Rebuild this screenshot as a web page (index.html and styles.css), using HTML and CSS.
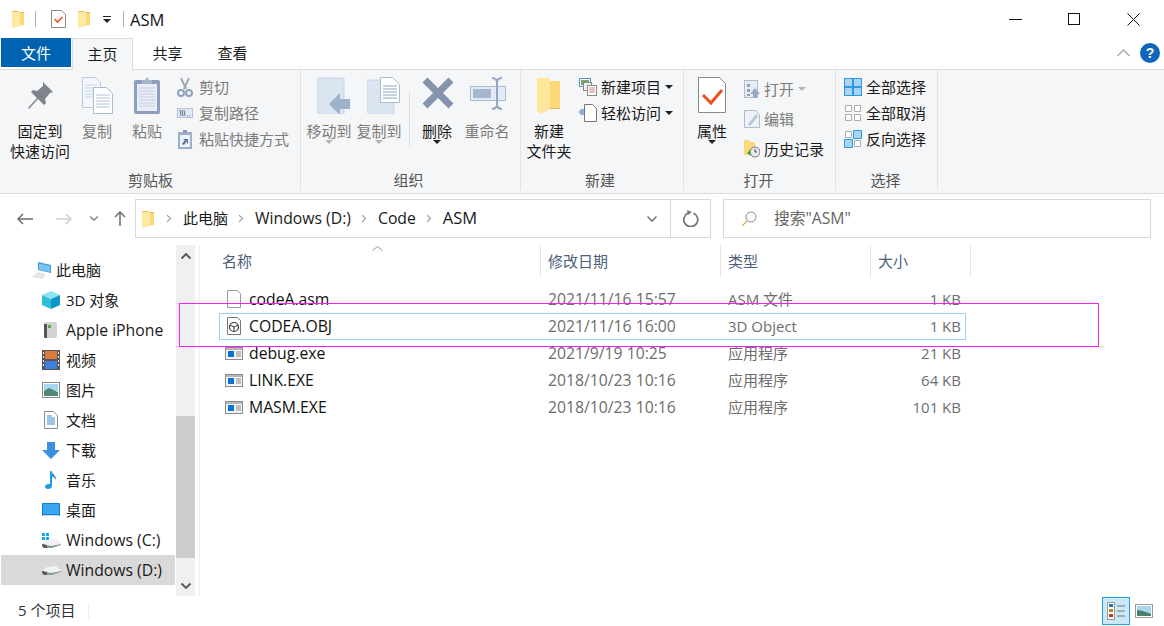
FILE: index.html
```html
<!DOCTYPE html>
<html lang="zh-CN">
<head>
    <meta charset="UTF-8">
    <meta name="viewport" content="width=device-width, initial-scale=1.0">
    <title>ASM</title>
    <link rel="stylesheet" href="styles.css">
</head>
<body>
    <svg class="sprite" xmlns="http://www.w3.org/2000/svg">
        <symbol id="folder" viewBox="0 0 13 18">
            <path d="M0 1h6l1 1h5v13H0z" fill="#e9bd58"/>
            <path d="M0 2h7l1 1 4 0v12l-8 2-4 1z" fill="#ffe9a3"/>
            <path d="M8 3h4v12H8z" fill="#fbd977"/>
        </symbol>
        <symbol id="chev-right" viewBox="0 0 8 12">
            <path d="M1.5 1.5 6 6l-4.5 4.5" fill="none" stroke="#9a9a9a" stroke-width="1.5"/>
        </symbol>
        <symbol id="chev-down" viewBox="0 0 12 8">
            <path d="M1.5 1.5 6 6l4.5-4.5" fill="none" stroke="#7a7a7a" stroke-width="1.6"/>
        </symbol>
        <symbol id="exe" viewBox="0 0 18 13">
            <rect x=".5" y=".5" width="17" height="12" fill="#f4f4f4" stroke="#8b8b8b"/>
            <path d="M1 1h16v2H1z" fill="#b5b5b5"/>
            <rect x="3" y="4" width="6" height="6" fill="#0a74d6"/>
            <path d="M11 5h5M11 7h5M11 9h5" stroke="#8a8a8a"/>
        </symbol>
        <symbol id="drive" viewBox="0 0 19 10">
            <path d="M0 6 5 2l9-1 5 4v2l-9 3H2L0 8z" fill="#f1f1f1"/>
            <path d="M0 6l9 2 10-2v1l-9 3H2L0 8z" fill="#9a9a9a"/>
            <path d="M0 6l5 1v3H2L0 8z" fill="#5c5c5c"/>
            <path d="M7 8h3v1H7z" fill="#3dbb3d"/>
        </symbol>
    </svg>

    <div class="titlebar">
        <svg class="ic-folder" width="13" height="18"><use href="#folder"/></svg>
        <span class="title-sep sep-a"></span>
        <svg class="ic-props" width="15" height="18" viewBox="0 0 15 18">
            <path d="M.5.5h10l4 4v13H.5z" fill="#fff" stroke="#8a8a8a"/>
            <path d="M3.5 9l3 3 5-5" fill="none" stroke="#e8541e" stroke-width="1.6"/>
        </svg>
        <svg class="ic-folder2" width="13" height="18"><use href="#folder"/></svg>
        <svg class="ic-qat" width="8" height="7" viewBox="0 0 8 7"><path d="M0 0h8v1H0zM0 3h8L4 7z" fill="#222"/></svg>
        <span class="title-sep sep-b"></span>
        <span class="title-text">ASM</span>
        <div class="window-btns">
            <svg width="13" height="13" viewBox="0 0 13 13"><path d="M0 6.5h13" stroke="#111"/></svg>
            <svg width="13" height="13" viewBox="0 0 13 13"><rect x=".5" y=".5" width="11" height="11" fill="none" stroke="#111"/></svg>
            <svg width="13" height="13" viewBox="0 0 13 13"><path d="M.5.5l12 12M12.500.5l-12 12" stroke="#111"/></svg>
        </div>
    </div>

    <div class="tabs">
        <div class="tab tab-file">文件</div>
        <div class="tab tab-active">主页</div>
        <div class="tab tab-plain">共享</div>
        <div class="tab tab-plain">查看</div>
        <div class="tabs-right">
            <svg width="13" height="8" viewBox="0 0 13 8"><path d="M.5 7 6.500 1l6 6" fill="none" stroke="#a9a9a9" stroke-width="1.4"/></svg>
            <span class="help">?</span>
        </div>
    </div>

    <div class="ribbon">
        <div class="group group-clip">
            <div class="group-body">
                <div class="big big-pin">
                    <div class="big-icon icon-pin">
                        <svg width="27" height="27" viewBox="0 0 27 27"><path d="M17 0l10 10-3 1-5 6 1 4-2 2-6-6-9 10-1-1 9-10-6-6 2-2 4 1 6-5z" fill="#7e838c"/></svg>
                    </div>
                    <span>固定到<br>快速访问</span>
                </div>
                <div class="big big-50 off">
                    <div class="big-icon">
                        <svg width="31" height="37" viewBox="0 0 31 37">
                            <path d="M.5.5h13l5 5v25H.5z" fill="#f3f6fb" stroke="#bcc9da"/>
                            <path d="M3 8h12M3 11h12M3 14h12M3 17h12M3 20h12" stroke="#c5d2e3"/>
                            <path d="M11.500 10.500h13l6 6v20h-19z" fill="#fff" stroke="#a9bcd3"/>
                            <path d="M14 18h14M14 21h14M14 24h14M14 27h14M14 30h14" stroke="#b2c3d8"/>
                        </svg>
                    </div>
                    <span>复制</span>
                </div>
                <div class="big big-50 off">
                    <div class="big-icon">
                        <svg width="26" height="37" viewBox="0 0 26 37">
                            <rect x="0" y="3" width="26" height="34" rx="2" fill="#8d9fbc"/>
                            <rect x="3" y="7" width="20" height="27" fill="#e9eef6"/>
                            <path d="M5 11h16M5 14h16M5 17h16M5 20h16M5 23h16M5 26h16M5 29h16" stroke="#c5d0e1"/>
                            <path d="M8 7V3h3l2-3 2 3h3v4z" fill="#a8b6cc"/>
                        </svg>
                    </div>
                    <span>粘贴</span>
                </div>
                <div class="small-stack off">
                    <div class="small">
                        <svg class="small-ic" width="16" height="19" viewBox="0 0 16 19">
                            <path d="M4 0l5 11M12 0 7 11" stroke="#a3a8b0" stroke-width="2" fill="none"/>
                            <circle cx="4" cy="15" r="3" fill="none" stroke="#8fa3bf" stroke-width="2"/>
                            <circle cx="12" cy="15" r="3" fill="none" stroke="#8fa3bf" stroke-width="2"/>
                        </svg>
                        <span>剪切</span>
                    </div>
                    <div class="small">
                        <svg class="small-ic" width="16" height="10" viewBox="0 0 16 10">
                            <rect x=".5" y=".5" width="15" height="9" fill="#e3e9f3" stroke="#b5c3d8"/>
                            <path d="M3 2l1 6M5 2l1 6M7 2l1 6" stroke="#5f7491"/>
                            <path d="M10 8h1M12 8h1" stroke="#5f7491"/>
                        </svg>
                        <span>复制路径</span>
                    </div>
                    <div class="small">
                        <svg class="small-ic" width="14" height="19" viewBox="0 0 14 19">
                            <rect y="2" width="14" height="17" fill="#9db0ca"/>
                            <rect x="2" y="5" width="10" height="12" fill="#eef2f8"/>
                            <path d="M5 0h4v3H5z" fill="#8a9cb7"/>
                            <path d="M4 14l3-4H5l1-1h4v4l-1 1V11l-3 4z" fill="#5b6f8f"/>
                        </svg>
                        <span>粘贴快捷方式</span>
                    </div>
                </div>
            </div>
            <div class="group-label">剪贴板</div>
        </div>

        <div class="group group-org">
            <div class="group-body">
                <div class="big big-50 off">
                    <div class="big-icon icon-right">
                        <svg width="33" height="37" viewBox="0 0 33 37">
                            <path d="M0 1h27v36H3l-3-2z" fill="#dbe5f2" stroke="#c8d6e8"/>
                            <path d="M12 27l11-11v6h10v10H23v6z" fill="#9fb2cc"/>
                        </svg>
                    </div>
                    <span>移动到</span>
                    <i class="caret caret-off"></i>
                </div>
                <div class="big big-50 off">
                    <div class="big-icon icon-right">
                        <svg width="33" height="37" viewBox="0 0 33 37">
                            <path d="M0 3h27v34H3l-3-2z" fill="#dbe5f2" stroke="#c8d6e8"/>
                            <path d="M13.500.5h12l7 7v18h-19z" fill="#fff" stroke="#a9bcd3"/>
                            <path d="M16 9h14M16 12h14M16 15h14M16 18h14M16 21h14" stroke="#8fa3bf"/>
                        </svg>
                    </div>
                    <span>复制到</span>
                    <i class="caret caret-off"></i>
                </div>
                <span class="inner-sep"></span>
                <div class="big big-50">
                    <div class="big-icon icon-nudge">
                        <svg width="32" height="32" viewBox="0 0 32 32"><path d="M3 3l26 26M29 3 3 29" stroke="#8494ad" stroke-width="7"/></svg>
                    </div>
                    <span>删除</span>
                    <i class="caret"></i>
                </div>
                <div class="big big-50 off">
                    <div class="big-icon icon-nudge">
                        <svg width="36" height="33" viewBox="0 0 36 33">
                            <rect x=".5" y="9.500" width="35" height="14" fill="#e4ebf5" stroke="#a9bcd3"/>
                            <rect x="3" y="12" width="18" height="9" fill="#a5b6cf"/>
                            <path d="M22 1c2 0 4 1 5 3 1-2 3-3 5-3M27 4v25M22 32c2 0 4-1 5-3 1 2 3 3 5 3" fill="none" stroke="#93a6c2" stroke-width="2"/>
                        </svg>
                    </div>
                    <span>重命名</span>
                </div>
            </div>
            <div class="group-label">组织</div>
        </div>

        <div class="group group-new">
            <div class="group-body">
                <div class="big big-50">
                    <div class="big-icon">
                        <svg width="24" height="37" viewBox="0 0 24 37">
                            <path d="M0 1h12v3h11v28H0z" fill="#e6bb57"/>
                            <path d="M0 1h12l1 2v29l-9 5-4-3z" fill="#ffe69a"/>
                            <path d="M13 4h10v27H13z" fill="#fcd878"/>
                        </svg>
                    </div>
                    <span>新建<br>文件夹</span>
                </div>
                <div class="small-stack">
                    <div class="small">
                        <svg class="small-ic" width="18" height="18" viewBox="0 0 18 18">
                            <rect x=".5" y=".5" width="11" height="8" fill="#fff" stroke="#4b95c9"/>
                            <rect x="2" y="2" width="8" height="5" fill="#7aa76b"/>
                            <rect x="4.500" y="4.500" width="8" height="8" fill="#eef0f3" stroke="#8a8a8a"/>
                            <rect x="8.500" y="7.500" width="9" height="10" fill="#fff" stroke="#8a8a8a"/>
                            <path d="M10 10h6M10 12h6M10 14h6" stroke="#d08a8a"/>
                        </svg>
                        <span>新建项目</span>
                        <i class="caret caret-side"></i>
                    </div>
                    <div class="small">
                        <svg class="small-ic" width="18" height="18" viewBox="0 0 18 18">
                            <path d="M5.500.5h8l4 4v13h-12z" fill="#fff" stroke="#777"/>
                            <path d="M1 6h5M0 8h5M1 10h4" stroke="#2a6fb5"/>
                        </svg>
                        <span>轻松访问</span>
                        <i class="caret caret-side"></i>
                    </div>
                </div>
            </div>
            <div class="group-label">新建</div>
        </div>

        <div class="group group-open">
            <div class="group-body">
                <div class="big big-40">
                    <div class="big-icon">
                        <svg width="28" height="36" viewBox="0 0 28 36">
                            <path d="M.5.5h21l6 6v29H.5z" fill="#fff" stroke="#8a8a8a"/>
                            <path d="M5 18l8 8 11-13" fill="none" stroke="#e8541e" stroke-width="3"/>
                        </svg>
                    </div>
                    <span>属性</span>
                    <i class="caret"></i>
                </div>
                <div class="small-stack small-tall">
                    <div class="small off">
                        <svg class="small-ic" width="16" height="18" viewBox="0 0 16 18">
                            <rect x=".5" y=".5" width="13" height="17" fill="#e8edf5" stroke="#aebcd0"/>
                            <path d="M3 4h3v3H3zM3 9h3v3H3zM3 14h3v2H3z" fill="#8fa3bf"/>
                            <path d="M6 14l5-6 5 6h-3v4H9v-4z" fill="#97abc7"/>
                        </svg>
                        <span>打开</span>
                        <i class="caret caret-side caret-off"></i>
                    </div>
                    <div class="small off">
                        <svg class="small-ic" width="16" height="18" viewBox="0 0 16 18">
                            <path d="M.5.5h11l4 4v13H.500z" fill="#eef2f8" stroke="#aebcd0"/>
                            <path d="M5 13 12 4l2 2-7 9-3 1z" fill="#b7c6da"/>
                        </svg>
                        <span>编辑</span>
                    </div>
                    <div class="small">
                        <svg class="small-ic" width="16" height="18" viewBox="0 0 16 18">
                            <path d="M0 0h5l1 2h5v13H0z" fill="#fbd878"/>
                            <circle cx="11" cy="12" r="5" fill="#e8e8e8" stroke="#777"/>
                            <path d="M11 9v3h2" fill="none" stroke="#444"/>
                            <path d="M3 13l3-3 1 6z" fill="#3fa53f"/>
                        </svg>
                        <span>历史记录</span>
                    </div>
                </div>
            </div>
            <div class="group-label">打开</div>
        </div>

        <div class="group group-select">
            <div class="group-body">
                <div class="small-stack">
                    <div class="small">
                        <svg class="small-ic" width="18" height="18" viewBox="0 0 18 18">
                            <rect x=".5" y=".5" width="17" height="17" fill="#a9d4f5" stroke="#2f97e0"/>
                            <path d="M9 0v18M0 9h18" stroke="#2f97e0" stroke-width="2"/>
                        </svg>
                        <span>全部选择</span>
                    </div>
                    <div class="small">
                        <svg class="small-ic" width="18" height="18" viewBox="0 0 18 18">
                            <path d="M1.500 1.500h6v6h-6zM10.500 1.500h6v6h-6zM1.500 10.500h6v6h-6zM10.500 10.500h6v6h-6z" fill="#fff" stroke="#adadad"/>
                        </svg>
                        <span>全部取消</span>
                    </div>
                    <div class="small">
                        <svg class="small-ic" width="18" height="18" viewBox="0 0 18 18">
                            <path d="M1.500 1.500h6v6h-6zM10.500 10.500h6v6h-6z" fill="#fff" stroke="#adadad"/>
                            <path d="M9.500.5h8v8h-8zM.5 9.500h8v8h-8z" fill="#a9d4f5" stroke="#2f97e0"/>
                        </svg>
                        <span>反向选择</span>
                    </div>
                </div>
            </div>
            <div class="group-label">选择</div>
        </div>
    </div>

    <div class="addressbar">
        <div class="nav-btns">
            <svg class="nav-back" width="16" height="12" viewBox="0 0 16 12"><path d="M16 6H1M6 1 1 6l5 5" fill="none" stroke="#6f6f6f" stroke-width="1.5"/></svg>
            <svg class="nav-fwd" width="16" height="12" viewBox="0 0 16 12"><path d="M0 6h15M10 1l5 5-5 5" fill="none" stroke="#d0d0d0" stroke-width="1.5"/></svg>
            <svg class="nav-down" width="10" height="7"><use href="#chev-down"/></svg>
            <svg class="nav-up" width="12" height="15" viewBox="0 0 12 15"><path d="M6 15V1M1 6l5-5 5 5" fill="none" stroke="#6f6f6f" stroke-width="1.5"/></svg>
        </div>
        <div class="address-box">
            <svg class="addr-folder" width="13" height="18"><use href="#folder"/></svg>
            <svg class="crumb-chev" width="6" height="9"><use href="#chev-right"/></svg>
            <span class="crumb">此电脑</span>
            <svg class="crumb-chev" width="6" height="9"><use href="#chev-right"/></svg>
            <span class="crumb lat">Windows (D:)</span>
            <svg class="crumb-chev" width="6" height="9"><use href="#chev-right"/></svg>
            <span class="crumb lat">Code</span>
            <svg class="crumb-chev" width="6" height="9"><use href="#chev-right"/></svg>
            <span class="crumb crumb-asm">ASM</span>
            <div class="addr-end">
                <div class="addr-drop"><svg width="12" height="8"><use href="#chev-down"/></svg></div>
                <div class="addr-refresh">
                    <svg width="16" height="17" viewBox="0 0 16 17"><path d="M10.500 3.200A7 7 0 1 1 5 3.200" fill="none" stroke="#777" stroke-width="1.800"/><path d="M4 0l1 5 4-3" fill="#777"/></svg>
                </div>
            </div>
        </div>
        <div class="search-box">
            <svg width="16" height="16" viewBox="0 0 16 16"><circle cx="10" cy="6" r="5" fill="none" stroke="#8a8a8a"/><path d="M6.500 9.500 1 15" stroke="#d9a766" stroke-width="1.200"/></svg>
            <span class="lat">搜索"ASM"</span>
        </div>
    </div>

    <div class="main">
        <div class="sidebar">
            <div class="nav-item nav-top">
                <svg width="20" height="17" viewBox="0 0 20 17"><path d="M6 0l13 3v8L6 8z" fill="#3a9be0"/><path d="M7 1.500l11 2.500v6L7 7.500z" fill="#7cc4f2"/><path d="M0 15l6-5 8 2-3 5z" fill="#e3e5e8"/></svg>
                <span>此电脑</span>
            </div>
            <div class="nav-item">
                <svg width="18" height="18" viewBox="0 0 18 18"><path d="M9 0l9 4-9 4-9-4z" fill="#8ce6ef"/><path d="M0 4l9 4v10l-9-4z" fill="#2fc0d6"/><path d="M18 4 9 8v10l9-4z" fill="#0e97c9"/></svg>
                <span>3D 对象</span>
            </div>
            <div class="nav-item">
                <svg width="18" height="18" viewBox="0 0 18 18"><rect x="2" y="1" width="13" height="16" rx="2" fill="#d2d2d2"/><path d="M2 3h3v14H3a1 1 0 0 1-1-1z" fill="#555"/><rect x="6" y="4" width="3" height="3" fill="#5aa05a"/></svg>
                <span class="lat">Apple iPhone</span>
            </div>
            <div class="nav-item">
                <svg width="18" height="20" viewBox="0 0 18 20"><rect width="18" height="20" fill="#555"/><rect x="3" y="1" width="12" height="8" fill="#d97b3e"/><rect x="3" y="11" width="12" height="8" fill="#3d7fd9"/><path d="M1 2h1v2H1zM1 6h1v2H1zM1 10h1v2H1zM1 14h1v2H1zM16 2h1v2h-1zM16 6h1v2h-1zM16 10h1v2h-1zM16 14h1v2h-1z" fill="#eee"/></svg>
                <span>视频</span>
            </div>
            <div class="nav-item">
                <svg width="18" height="16" viewBox="0 0 18 16"><rect x=".5" y=".5" width="17" height="15" fill="#fff" stroke="#8a8a8a"/><rect x="2" y="2" width="14" height="7" fill="#a9d6ef"/><path d="M2 9l5-3 9 4v4H2z" fill="#4e8a73"/></svg>
                <span>图片</span>
            </div>
            <div class="nav-item">
                <svg width="14" height="18" viewBox="0 0 14 18"><path d="M.5.5h9l4 4v13H.5z" fill="#fff" stroke="#8a8a8a"/><path d="M3 5h5M3 7h8M3 9h8M3 11h8M3 13h8" stroke="#3d87c9"/></svg>
                <span>文档</span>
            </div>
            <div class="nav-item">
                <svg width="18" height="17" viewBox="0 0 18 17"><path d="M5 0h8v8h5l-9 9-9-9h5z" fill="#3d8fe0"/></svg>
                <span>下载</span>
            </div>
            <div class="nav-item">
                <svg width="12" height="18" viewBox="0 0 12 18"><path d="M5 0h1.500c.5 3 5 4 4.500 9-1-2-2.500-3-4-3.500V15c0 2-2 3-4 3s-3-1-3-2.500S2 12.500 5 13z" fill="#1f9bea"/></svg>
                <span>音乐</span>
            </div>
            <div class="nav-item">
                <svg width="18" height="14" viewBox="0 0 18 14"><rect width="18" height="13" rx="1" fill="#0e7fd6"/><rect x="1" y="1" width="16" height="10" fill="#39a6ef"/><path d="M1 12h16v1H1z" fill="#bfe3fb"/></svg>
                <span>桌面</span>
            </div>
            <div class="nav-item nav-drive">
                <svg width="19" height="15" viewBox="0 0 19 15">
                    <path d="M0 0h3v3H0zM4 0h3v3H4zM0 4h3v3H0zM4 4h3v3H4z" fill="#1ea5e8"/>
                    <use href="#drive" y="5" width="19" height="10"/>
                </svg>
                <span class="lat">Windows (C:)</span>
            </div>
            <div class="nav-item nav-drive nav-selected">
                <svg width="19" height="10"><use href="#drive"/></svg>
                <span class="lat">Windows (D:)</span>
            </div>
        </div>
        <div class="scrollbar">
            <div class="scroll-btn"><svg width="12" height="8" viewBox="0 0 12 8"><path d="M1.500 6.500 6 2l4.500 4.500" fill="none" stroke="#555" stroke-width="1.800"/></svg></div>
            <div class="scroll-track"><div class="scroll-thumb"></div></div>
            <div class="scroll-btn"><svg width="12" height="8" viewBox="0 0 12 8"><path d="M1.500 1.500 6 6l4.500-4.500" fill="none" stroke="#555" stroke-width="1.800"/></svg></div>
        </div>
        <div class="files">
            <div class="file-head">
                <div class="head-cell head-name">
                    名称
                    <svg class="sort-caret" width="11" height="5" viewBox="0 0 11 5"><path d="M.5 4.500l5-4 5 4" fill="none" stroke="#9a9a9a"/></svg>
                </div>
                <div class="head-cell">修改日期</div>
                <div class="head-cell">类型</div>
                <div class="head-cell">大小</div>
            </div>
            <div class="file-row">
                <div class="file-name">
                    <svg width="18" height="18" viewBox="0 0 18 18"><path d="M2.500.5h10l3 3v14h-13z" fill="#fff" stroke="#9a9a9a"/></svg>
                    codeA.asm
                </div>
                <div class="file-cell lat">2021/11/16 15:57</div>
                <div class="file-cell">ASM 文件</div>
                <div class="file-size">1 KB</div>
            </div>
            <div class="file-row file-row-focus">
                <div class="file-name">
                    <svg width="18" height="18" viewBox="0 0 18 18"><path d="M2.500.5h10l3 3v14h-13z" fill="#fff" stroke="#777"/><circle cx="9" cy="10" r="4.500" fill="none" stroke="#333" stroke-width="1.200"/><path d="M5 8l4 2 4-2M9 10v4" fill="none" stroke="#333"/></svg>
                    CODEA.OBJ
                </div>
                <div class="file-cell lat">2021/11/16 16:00</div>
                <div class="file-cell">3D Object</div>
                <div class="file-size">1 KB</div>
            </div>
            <div class="file-row">
                <div class="file-name"><svg width="18" height="13"><use href="#exe"/></svg>debug.exe</div>
                <div class="file-cell lat">2021/9/19 10:25</div>
                <div class="file-cell">应用程序</div>
                <div class="file-size">21 KB</div>
            </div>
            <div class="file-row">
                <div class="file-name"><svg width="18" height="13"><use href="#exe"/></svg>LINK.EXE</div>
                <div class="file-cell lat">2018/10/23 10:16</div>
                <div class="file-cell">应用程序</div>
                <div class="file-size">64 KB</div>
            </div>
            <div class="file-row">
                <div class="file-name"><svg width="18" height="13"><use href="#exe"/></svg>MASM.EXE</div>
                <div class="file-cell lat">2018/10/23 10:16</div>
                <div class="file-cell">应用程序</div>
                <div class="file-size">101 KB</div>
            </div>
        </div>
        <div class="highlight"></div>
    </div>

    <div class="statusbar">
        <span class="status-text">5 个项目</span>
        <div class="view-btns">
            <div class="view-btn view-btn-on">
                <svg width="18" height="18" viewBox="0 0 18 18">
                    <rect x=".5" y=".5" width="7" height="17" fill="#fff" stroke="#9a9a9a"/>
                    <path d="M2 2h4v3H2z" fill="#2a6fa8"/><path d="M2 7h4v3H2z" fill="#b08a2a"/><path d="M2 12h4v3H2z" fill="#c0392b"/>
                    <path d="M10 4h8M10 9h8M10 14h8" stroke="#777" stroke-width="1.200"/>
                </svg>
            </div>
            <div class="view-btn">
                <svg width="18" height="14" viewBox="0 0 18 14">
                    <rect x=".5" y=".5" width="17" height="13" fill="#fff" stroke="#9a9a9a"/>
                    <rect x="2" y="2" width="14" height="10" fill="#a9d6ef"/>
                    <path d="M2 6l6 1 8 3v2H2z" fill="#4e7f6d"/>
                </svg>
            </div>
        </div>
    </div>
</body>
</html>
```

FILE: styles.css
```css
* {
    box-sizing: border-box;
}

html, body {
    height: 100%;
}

body {
    margin: 0;
    overflow: hidden;
    background: #fff;
    color: #1a1a1a;
    font-family: "Open Sans", "Noto Sans CJK SC", sans-serif;
    font-size: 15px;
}

svg {
    display: block;
    flex: none;
}

.sprite {
    display: none;
}

.lat {
    font-size: 15.75px;
}

/* title bar */
.titlebar {
    display: flex;
    align-items: center;
    height: 38px;
    padding-left: 12px;
}

.title-sep {
    width: 1px;
    height: 16px;
    background: #b5b5b5;
}

.sep-a { margin-left: 10px; }
.ic-props { margin-left: 15px; }
.ic-folder2 { margin-left: 12px; }
.ic-qat { margin-left: 12px; }
.sep-b { margin-left: 12px; }

.title-text {
    margin-left: 6px;
    font-size: 16.5px;
    color: #111;
}

.window-btns {
    display: flex;
    gap: 46px;
    margin-left: auto;
    margin-right: 24px;
}

/* tabs */
.tabs {
    display: flex;
    height: 32px;
    padding-left: 1px;
    border-bottom: 1px solid #dadbdc;
}

.tab {
    display: flex;
    align-items: center;
    justify-content: center;
    height: 31px;
    padding-bottom: 3px;
}

.tab-file {
    width: 70px;
    height: 29px;
    margin-right: 1px;
    padding-bottom: 1px;
    background: #0063b1;
    color: #fff;
}

.tab-active {
    width: 61px;
    height: 32px;
    margin-right: 2px;
    background: #f5f6f7;
    border: 1px solid #dadbdc;
    border-bottom: none;
}

.tab-plain {
    width: 65px;
}

.tabs-right {
    display: flex;
    align-items: center;
    gap: 10px;
    margin-left: auto;
    padding-right: 4px;
    height: 30px;
}

.help {
    width: 20px;
    height: 20px;
    border-radius: 50%;
    background: #0f67bd;
    color: #fff;
    font-family: "Liberation Sans", sans-serif;
    font-size: 14px;
    font-weight: bold;
    line-height: 20px;
    text-align: center;
}

/* ribbon */
.ribbon {
    display: flex;
    height: 124px;
    background: #f5f6f7;
    border-bottom: 1px solid #dadbdc;
    padding-left: 1px;
}

.group {
    position: relative;
    display: flex;
    flex-direction: column;
    padding-top: 5px;
    height: 120px;
    border-right: 1px solid #e1e3e6;
}

.group-clip { width: 300px; padding-left: 7px; }
.group-org { width: 220px; padding-left: 3px; }
.group-new { width: 163px; padding-left: 3px; }
.group-open { width: 152px; padding-left: 8px; }
.group-select { width: 102px; padding-left: 3px; }

.group-body {
    display: flex;
    height: 95px;
}

.group-label {
    position: absolute;
    left: 0;
    right: 0;
    bottom: 0;
    height: 20px;
    line-height: 20px;
    text-align: center;
    color: #555;
}

.group-org .group-label,
.group-new .group-label {
    right: 4px;
}

.group-open .group-label,
.group-select .group-label {
    right: 2px;
}

.big {
    display: flex;
    flex-direction: column;
    align-items: center;
    padding-top: 2px;
    line-height: 20px;
    text-align: center;
    white-space: nowrap;
}

.big-pin { width: 64px; }
.big-50 { width: 50px; }
.big-40 { width: 40px; }

.big-icon {
    display: flex;
    align-items: flex-start;
    justify-content: center;
    height: 44px;
}

.icon-pin { padding: 5px 2px 0 0; }
.icon-right { padding-left: 8px; }
.icon-nudge { padding-left: 2px; }

.off {
    color: #7b7b7b;
}

.caret {
    width: 0;
    height: 0;
    margin-top: -1px;
    border-left: 4px solid transparent;
    border-right: 4px solid transparent;
    border-top: 4px solid #222;
}

.caret-off {
    border-top-color: #b5b5b5;
}

.caret-side {
    margin: 1px 0 0 4px;
}

.inner-sep {
    width: 1px;
    height: 55px;
    margin: 16px 2px 0 5px;
    background: #dcdfe3;
}

.small-stack {
    display: flex;
    flex-direction: column;
    margin: -2px 0 0 5px;
}

.small {
    display: flex;
    align-items: center;
    height: 26px;
    white-space: nowrap;
}

.small-tall {
    margin-left: 12px;
}

.small-tall .small {
    height: 30px;
}

.small-ic {
    margin: 2px 4px 0 0;
}

.group-clip .small-ic {
    width: 16px;
    margin-right: 6px;
}

/* address bar */
.addressbar {
    display: flex;
    align-items: flex-start;
    height: 51px;
    padding-top: 5px;
}

.nav-btns {
    display: flex;
    align-items: center;
    width: 135px;
    height: 39px;
    padding-left: 17px;
}

.nav-fwd { margin-left: 23px; }
.nav-down { margin-left: 17px; }
.nav-up { margin-left: 15px; }

.address-box {
    display: flex;
    align-items: center;
    width: 576px;
    height: 39px;
    padding-left: 6px;
    border: 1px solid #d9d9d9;
}

.crumb {
    padding-bottom: 2px;
}

.crumb-asm {
    font-size: 16.5px;
}

.crumb-chev {
    margin: 0 11px 0 10px;
}

.addr-folder + .crumb-chev {
    margin-left: 11px;
}

.addr-end {
    display: flex;
    align-items: center;
    height: 100%;
    margin-left: auto;
}

.addr-drop {
    display: flex;
    align-items: center;
    justify-content: center;
    width: 40px;
    height: 100%;
    padding-left: 2px;
    border-right: 1px solid #d9d9d9;
}

.addr-refresh {
    display: flex;
    align-items: center;
    justify-content: center;
    width: 39px;
    height: 100%;
    padding-left: 1px;
}

.search-box {
    display: flex;
    align-items: center;
    gap: 17px;
    width: 428px;
    height: 39px;
    margin-left: 12px;
    padding-left: 17px;
    border: 1px solid #d9d9d9;
    color: #666;
}

.search-box span {
    padding-bottom: 2px;
}

/* main area */
.main {
    position: relative;
    display: flex;
    height: 351px;
}

.sidebar {
    width: 176px;
    padding: 10px 0 0 1px;
}

.nav-item {
    display: flex;
    align-items: center;
    height: 30px;
    padding-left: 41px;
    white-space: nowrap;
}

.nav-item span {
    padding-bottom: 2px;
}

.nav-item span.lat {
    padding-bottom: 0;
}

.nav-item > svg {
    width: 18px;
    margin-right: 6px;
}

.nav-top {
    padding-left: 31px;
}

.nav-top > svg {
    width: 20px;
    margin-right: 4px;
}

.nav-drive > svg {
    width: 19px;
    margin-right: 5px;
}

.nav-selected {
    background: #d9d9d9;
    width: 174px;
}

.scrollbar {
    display: flex;
    flex-direction: column;
    width: 19px;
    background: #f0f0f0;
}

.scroll-btn {
    display: flex;
    align-items: center;
    justify-content: center;
    height: 21px;
}

.scroll-track {
    flex: 1;
    padding-top: 150px;
    padding-bottom: 17px;
}

.scroll-thumb {
    height: 142px;
    background: #cdcdcd;
}

.files {
    flex: 1;
    margin-left: 4px;
    border-left: 1px solid #f0f0f0;
}

.file-head {
    display: grid;
    grid-template-columns: 341px 180px 150px 100px;
    height: 32px;
    margin-bottom: 9px;
}

.head-cell {
    position: relative;
    padding: 5px 0 0 7px;
    border-right: 1px solid #e5e5e5;
    color: #4c607a;
}

.head-name {
    padding-left: 22px;
}

.sort-caret {
    position: absolute;
    left: 172px;
    top: 1px;
}

.file-row {
    display: grid;
    grid-template-columns: 320px 180px 150px 95px;
    align-items: center;
    width: 747px;
    height: 27px;
    margin-left: 19px;
    padding-bottom: 2px;
    border: 1px solid transparent;
}

.file-row-focus {
    border-color: #99d1ff;
}

.file-name {
    display: flex;
    align-items: center;
    gap: 6px;
    padding-left: 5px;
    font-size: 15.75px;
    color: #111;
}

.file-name svg {
    margin-top: 1px;
}

.file-cell {
    padding-left: 8px;
    color: #6d6d6d;
}

.file-size {
    padding-right: 4px;
    text-align: right;
    color: #6d6d6d;
}

.highlight {
    position: absolute;
    left: 179px;
    top: 58px;
    width: 920px;
    height: 44px;
    border: 1px solid #f91ef9;
}

/* status bar */
.statusbar {
    display: flex;
    align-items: center;
    height: 30px;
    padding-left: 18px;
}

.status-text {
    width: 71px;
    height: 16px;
    line-height: 14px;
    border-right: 1px solid #eee;
    color: #333;
}

.view-btns {
    display: flex;
    align-items: center;
    margin-left: auto;
    padding-right: 10px;
    height: 100%;
}

.view-btn {
    display: flex;
    align-items: center;
    justify-content: center;
    width: 28px;
    height: 28px;
}

.view-btn-on {
    background: #cbe8f6;
    border: 1px solid #26a0da;
}

.view-btn:last-child {
    width: 24px;
    padding-left: 4px;
}
```
